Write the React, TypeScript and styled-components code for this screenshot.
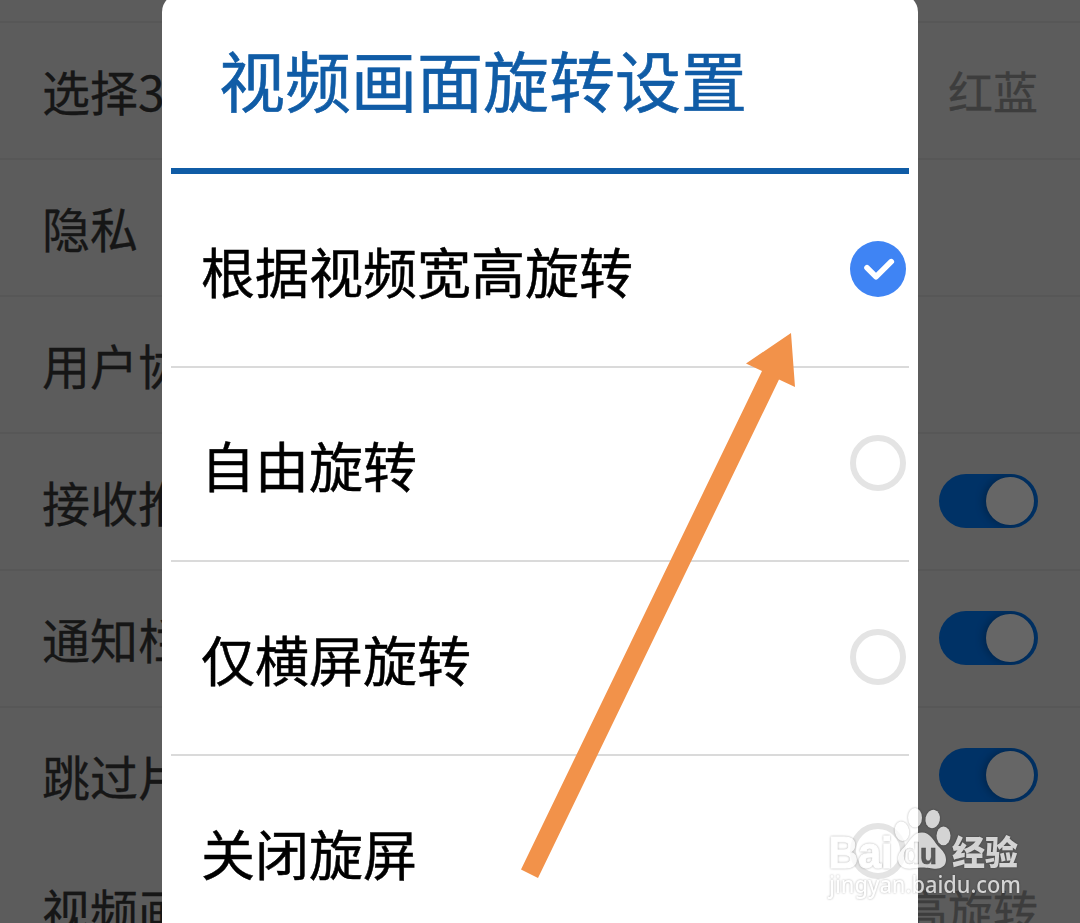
import React from "react";
import styled, { createGlobalStyle } from "styled-components";

interface Setting {
    label: string;
    value?: string;
    toggle?: boolean;
}

interface SettingRowProps {
    $last?: boolean;
}

interface RadioProps {
    $checked: boolean;
}

const settings: Setting[] = [
    { label: "选择3D", value: "红蓝" },
    { label: "隐私" },
    { label: "用户协" },
    { label: "接收推", toggle: true },
    { label: "通知栏", toggle: true },
    { label: "跳过片", toggle: true },
    { label: "视频画", value: "高旋转" },
];

const options = ["根据视频宽高旋转", "自由旋转", "仅横屏旋转", "关闭旋屏"];

const CheckSVG = () => {
    return (
        <svg width="56" height="56" viewBox="0 0 56 56" fill="none">
            <path d="M17 26.8L26 35.8L41.3 20.6" stroke="#ffffff" strokeWidth="5.6" strokeLinecap="round" strokeLinejoin="round" />
        </svg>
    );
};

const ArrowSVG = () => {
    return (
        <svg width="280" height="550" viewBox="520 330 280 550">
            <polygon points="791,333 795,387 779,379.5 538,878 521,869.5 762,371 746,363.5" fill="#f2924a" />
        </svg>
    );
};

const WatermarkSVG = () => {
    return (
        <svg width="210" height="106" viewBox="820 802 210 106">
            <mask id="paw" maskUnits="userSpaceOnUse" x="820" y="802" width="210" height="106">
                <rect x="820" y="802" width="210" height="106" fill="#ffffff" />
                <text x="903" y="863.5" fontSize="29" fontWeight="700" fill="#000000" stroke="#000000" strokeWidth="0.6" textLength="34" lengthAdjust="spacingAndGlyphs">du</text>
            </mask>
            <g fill="#ffffff">
                <text x="828.5" y="867.5" fontSize="44" fontWeight="700" stroke="#ffffff" strokeWidth="1" textLength="64" lengthAdjust="spacingAndGlyphs">Bai</text>
                <ellipse cx="902" cy="831.2" rx="7.2" ry="9.8" transform="rotate(-10 902 831.2)" />
                <ellipse cx="915" cy="817.8" rx="7" ry="9.8" />
                <ellipse cx="932.7" cy="819" rx="7.2" ry="9.2" transform="rotate(12 932.7 819)" />
                <ellipse cx="943.5" cy="835.8" rx="7" ry="9.4" />
                <path mask="url(#paw)" d="M922 832.5C930 832.5 933 840 938 846C943 851 946 854 946 860C946 866 941 868.7 936 868.7C931 868.7 928 867.5 922 867.5C916 867.5 913 868.7 909 868.7C903 868.7 898 865 898 859C898 852 903 849 907 844C911 839 914 832.5 922 832.5Z" />
                <text x="952" y="865" fontSize="34" fontWeight="900" textLength="66" lengthAdjust="spacingAndGlyphs">经验</text>
                <text className="url" x="829" y="893" fontSize="23" textLength="192" lengthAdjust="spacingAndGlyphs">jingyan.baidu.com</text>
            </g>
        </svg>
    );
};

const App = () => {
    return (
        <Screen>
            <GlobalStyle />
            <SettingsPage>
                <PageTop />
                {settings.map((item, i) => (
                    <SettingRow key={item.label} $last={i === settings.length - 1}>
                        <SettingLabel>{item.label}</SettingLabel>
                        {item.value && <SettingValue>{item.value}</SettingValue>}
                        {item.toggle && (
                            <Toggle>
                                <Knob />
                            </Toggle>
                        )}
                    </SettingRow>
                ))}
            </SettingsPage>

            <Overlay>
                <Dialog>
                    <DialogTitle>视频画面旋转设置</DialogTitle>
                    {options.map((text, i) => (
                        <Option key={text}>
                            <OptionLabel>{text}</OptionLabel>
                            <Radio $checked={i === 0}>{i === 0 && <CheckSVG />}</Radio>
                        </Option>
                    ))}
                </Dialog>
            </Overlay>

            <ArrowWrap>
                <ArrowSVG />
            </ArrowWrap>
            <WatermarkWrap>
                <WatermarkSVG />
            </WatermarkWrap>
        </Screen>
    );
};

const GlobalStyle = createGlobalStyle`
    * {
        box-sizing: border-box;
    }
    body {
        margin: 0;
        overflow: hidden;
        font-family: "Noto Sans CJK SC", sans-serif;
    }
    svg {
        display: block;
    }
`;

const Screen = styled.div`
    position: relative;
    width: 1080px;
    height: 923px;
    overflow: hidden;
`;

const SettingsPage = styled.div`
    height: 100%;
    overflow: hidden;
    background-color: #e6e6e6;
`;

const PageTop = styled.div`
    height: 23px;
    border-bottom: 2px solid #dadada;
`;

const SettingRow = styled.div<SettingRowProps>`
    display: flex;
    align-items: center;
    justify-content: space-between;
    height: ${(props) => (props.$last ? "131px" : "137px")};
    padding: 0 42px;
    border-bottom: 2px solid ${(props) => (props.$last ? "transparent" : "#dadada")};
    &:nth-last-child(2) {
        border-color: transparent;
    }
`;

const SettingLabel = styled.span`
    padding-bottom: 2px;
    font-size: 48px;
    line-height: 60px;
    color: #393939;
    white-space: nowrap;
    -webkit-text-stroke: 0.3px #393939;
`;

const SettingValue = styled.span`
    font-size: 45px;
    line-height: 60px;
    color: #989898;
    white-space: nowrap;
    -webkit-text-stroke: 0.3px #989898;
`;

const Toggle = styled.div`
    display: flex;
    align-items: center;
    justify-content: flex-end;
    width: 99px;
    height: 54px;
    margin-bottom: 2px;
    padding-right: 4px;
    border-radius: 27px;
    background-color: #007dff;
    overflow: hidden;
`;

const Knob = styled.div`
    width: 48px;
    height: 48px;
    border-radius: 50%;
    background-color: #ffffff;
    box-shadow: -2px 0 10px rgba(0, 0, 0, 0.3);
`;

const Overlay = styled.div`
    position: absolute;
    inset: 0;
    display: flex;
    justify-content: center;
    align-items: flex-start;
    background-color: rgba(0, 0, 0, 0.6);
`;

const Dialog = styled.div`
    width: 756px;
    height: 970px;
    margin-top: -6px;
    padding: 0 9px;
    border-radius: 18px;
    background-color: #ffffff;
`;

const DialogTitle = styled.h1`
    height: 180px;
    margin: 0;
    padding: 44px 0 0 48px;
    border-bottom: 6px solid #105ca6;
    font-size: 66px;
    font-weight: 400;
    line-height: 80px;
    color: #105ca6;
    -webkit-text-stroke: 0.6px #105ca6;
`;

const Option = styled.div`
    display: flex;
    align-items: center;
    justify-content: space-between;
    height: 194px;
    padding: 0 3px 2px 30px;
    border-bottom: 2px solid #dadada;
`;

const OptionLabel = styled.span`
    padding-top: 4px;
    font-size: 54px;
    line-height: 70px;
    color: #000000;
    -webkit-text-stroke: 0.5px #000000;
`;

const Radio = styled.div<RadioProps>`
    width: 56px;
    height: 56px;
    border: ${(props) => (props.$checked ? "none" : "6px solid #e4e4e4")};
    border-radius: 50%;
    background-color: ${(props) => (props.$checked ? "#3f84f4" : "#ffffff")};
`;

const ArrowWrap = styled.div`
    position: absolute;
    left: 520px;
    top: 330px;
`;

const WatermarkWrap = styled.div`
    position: absolute;
    left: 820px;
    top: 802px;
    opacity: 0.74;
    filter: drop-shadow(0 0 1px rgba(0, 0, 0, 0.4));
    font-family: "Liberation Sans", "Noto Sans CJK SC", sans-serif;
    .url {
        font-family: "Noto Sans", sans-serif;
        font-weight: 500;
    }
`;

export default App;
